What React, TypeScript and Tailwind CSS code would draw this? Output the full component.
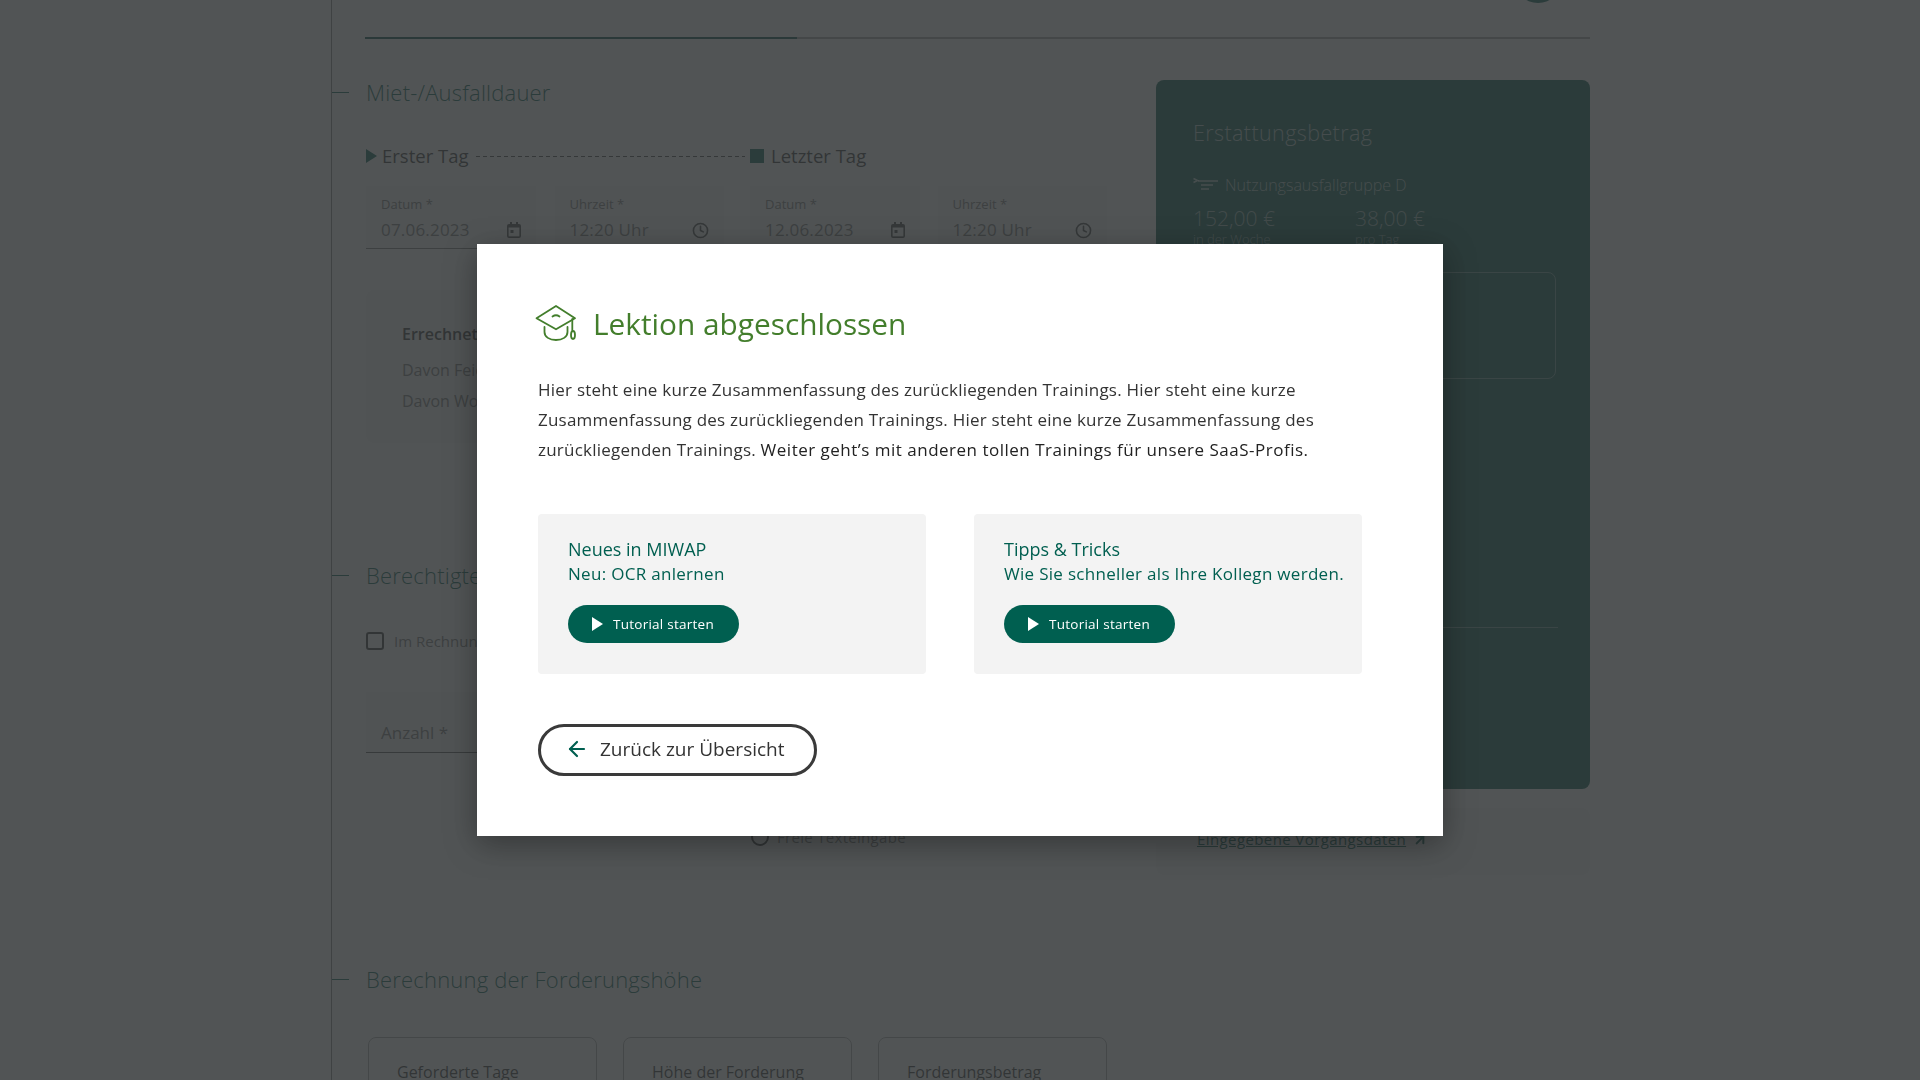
import { ArrowLeft, ArrowUpRight, Clock } from "lucide-react";

const font = { fontFamily: '"Open Sans", "Noto Sans", sans-serif' };

function CalendarIcon() {
  return (
    <svg width="14" height="16" viewBox="0 0 14 16" className="text-[#444]">
      <path d="M3 0h2v2h4V0h2v2h1a2 2 0 0 1 2 2v10a2 2 0 0 1-2 2H2a2 2 0 0 1-2-2V4a2 2 0 0 1 2-2h1z" fill="currentColor" />
      <rect x="1.6" y="5.5" width="10.8" height="8.9" fill="#f6f6f6" />
      <rect x="3.5" y="8" width="3" height="3" fill="currentColor" />
    </svg>
  );
}

function CapIcon() {
  return (
    <svg width="42" height="40" viewBox="0 0 42 40" fill="none" stroke="#437e2c" strokeWidth="1.8" strokeLinecap="round" strokeLinejoin="round">
      <path d="M21 2 40 14.3 21 25.3 1.5 14.3Z" />
      <path d="M17.5 12.5q3.5-2.5 7 0" />
      <path d="M9.5 23v5c0 5 5 8 11.5 8s11.5-3 11.5-8v-5" />
      <path d="M37.3 15v11" />
      <ellipse cx="38" cy="31" rx="2" ry="4" />
    </svg>
  );
}

function GroupIcon() {
  return (
    <svg width="26" height="16" viewBox="0 0 26 16" fill="none" stroke="#fff" strokeOpacity="0.7" strokeWidth="1.6">
      <path d="M0.5 1.5 4.5 3.5 0.5 5.5" />
      <path d="M5 4h20M8 8h12M8 12h8" />
    </svg>
  );
}

function SectionTitle({ children, className }: { children: string; className: string }) {
  return (
    <div className={`flex items-center ${className}`}>
      <div className="h-px w-[17px] bg-[#005d4f]" />
      <h2 className="ml-[17px] text-[22px] leading-[30px] font-light tracking-[0.2px] text-[#005d4f]">{children}</h2>
    </div>
  );
}

function DateField({ label, value, icon }: { label: string; value: string; icon: "date" | "time" }) {
  return (
    <div className="h-[63px] w-[169.5px] shrink-0 border-b border-[#777] bg-[#f6f6f6] px-[15px] pt-[10px]">
      <div className="text-[13px] leading-4 text-[#777]">{label}</div>
      <div className="mt-[7px] flex items-center justify-between">
        <span className="text-[17px] leading-[22px] tracking-[0.2px] text-[#777]">{value}</span>
        {icon === "date" ? <CalendarIcon /> : <Clock size={17} strokeWidth={2.2} className="text-[#444]" />}
      </div>
    </div>
  );
}

function AmountCard({ title }: { title: string }) {
  return (
    <div className="h-[80px] w-[230px] rounded-lg border border-[#aaa] px-[28px] pt-[24px]">
      <div className="text-[16px] leading-5 font-medium text-[#333]">{title}</div>
    </div>
  );
}

function TutorialCard({ title, text }: { title: string; text: string }) {
  return (
    <div className="h-[160px] w-[388px] rounded-[4px] bg-[#f3f3f3] pt-[23px] pl-[30px]">
      <div className="text-[18px] leading-[24px] font-medium text-[#005f50]">{title}</div>
      <div className="mt-px text-[17px] leading-[24px] tracking-[0.3px] whitespace-nowrap text-[#005f50]">{text}</div>
      <button className="mt-[19px] flex h-[38px] w-[171px] items-center rounded-full bg-[#005f50] pl-[24px] text-[13.5px] font-medium tracking-[0.25px] text-white">
        <svg width="11" height="14" viewBox="0 0 11 14" fill="#fff"><path d="M0 0 11 7 0 14Z" /></svg>
        <span className="ml-[10px]">Tutorial starten</span>
      </button>
    </div>
  );
}

export default function App() {
  return (
    <div className="relative h-screen overflow-hidden bg-white" style={font}>
      <div className="ml-[331px] h-full border-l border-[#888] pl-[33px]">
        <div className="relative h-[39px] w-[1225px] border-b-2 border-[#aaa]">
          <div className="absolute -bottom-[2px] left-0 h-[2px] w-[432px] bg-[#004d42]" />
          <div className="absolute -top-[45px] right-[28px] h-[48px] w-[48px] rounded-full bg-[#005d4f]" />
        </div>

        <div className="flex">
          <div className="-ml-[33px] w-[775px] shrink-0">
            <SectionTitle className="mt-[38px]">Miet-/Ausfalldauer</SectionTitle>

            <div className="mt-[34px] ml-[34px] flex h-[30px] items-center">
              <svg width="11" height="14" viewBox="0 0 11 14" fill="#005d4f"><path d="M0 0 11 7 0 14Z" /></svg>
              <span className="ml-[5px] w-[89px] text-[18.5px] font-medium text-[#333]">Erster Tag</span>
              <div className="mx-[5px] h-px w-[269px] bg-[repeating-linear-gradient(90deg,#444_0_4px,transparent_4px_7px)]" />
              <div className="h-[14px] w-[14px] bg-[#005d4f]" />
              <span className="ml-[7px] text-[18.5px] font-medium text-[#333]">Letzter Tag</span>
            </div>

            <div className="mt-[15px] ml-[34px] flex">
              <DateField label="Datum *" value="07.06.2023" icon="date" />
              <div className="ml-[19px]"><DateField label="Uhrzeit *" value="12:20 Uhr" icon="time" /></div>
              <div className="ml-[26px]"><DateField label="Datum *" value="12.06.2023" icon="date" /></div>
              <div className="ml-[18px]"><DateField label="Uhrzeit *" value="12:20 Uhr" icon="time" /></div>
            </div>

            <div className="mt-[41px] ml-[34px] h-[153px] w-[741px] rounded-lg bg-[#f6f6f6] px-[36px] pt-[33px] text-[16px] text-[#777]">
              <div className="leading-[22px] font-semibold text-[#333]">Errechnete Miettage</div>
              <div className="mt-[14px] leading-[22px]">Davon Feiertage</div>
              <div className="mt-[9px] leading-[22px]">Davon Wochenenden</div>
            </div>

            <SectionTitle className="mt-[117px]">Berechtigte Forderung</SectionTitle>

            <label className="mt-[40px] ml-[34px] flex items-center">
              <span className="h-[18px] w-[18px] rounded-[3px] border-2 border-[#333]" />
              <span className="ml-[10px] text-[15px] leading-[22px] text-[#777]">Im Rechnungsbetrag enthalten</span>
            </label>

            <div className="mt-[40px] ml-[34px] flex h-[61px] w-[360px] items-end border-b border-[#555] bg-[#f6f6f6] px-[15px] pb-[7px] text-[17px] text-[#777]">Anzahl *</div>

            <label className="mt-[74px] ml-[419px] flex items-center">
              <span className="h-[18px] w-[18px] rounded-full border-2 border-[#333]" />
              <span className="ml-[8px] text-[15px] leading-[20px] tracking-[0.3px] text-[#777]">Freie Texteingabe</span>
            </label>

            <SectionTitle className="mt-[117px]">Berechnung der Forderungshöhe</SectionTitle>

            <div className="mt-[43px] ml-[36px] flex gap-[26px]">
              <AmountCard title="Geforderte Tage" />
              <AmountCard title="Höhe der Forderung" />
              <AmountCard title="Forderungsbetrag" />
            </div>
          </div>

          <div className="ml-[49px] w-[434px] pt-[41px]">
            <div className="h-[709px] rounded-lg bg-[#00574a] px-[37px] pt-[38px] text-white/70">
              <div className="text-[21.5px] leading-[30px] font-light tracking-[0.4px]">Erstattungsbetrag</div>
              <div className="mt-[25px] flex items-center text-[16px] leading-[24px] font-light">
                <GroupIcon />
                <span className="ml-[6px]">Nutzungsausfallgruppe D</span>
              </div>
              <div className="mt-[8px] flex text-white/60">
                <div className="w-[162px]">
                  <div className="text-[21px] leading-[26px] font-light">152,00 €</div>
                  <div className="text-[13px] leading-4 font-light">in der Woche</div>
                </div>
                <div>
                  <div className="text-[21px] leading-[26px] font-light">38,00 €</div>
                  <div className="text-[13px] leading-4 font-light">pro Tag</div>
                </div>
              </div>
              <div className="mt-[25px] -mr-[3px] h-[107px] rounded-lg border border-white/40" />
              <div className="mt-[248px] -mr-[5px] border-t border-white/40" />
            </div>

            <div className="mt-[19px] flex h-[67px] items-center rounded-lg bg-[#f8f8f8] pb-[4px] pl-[41px]">
              <a className="text-[15px] tracking-[0.4px] text-[#005d4f] underline">Eingegebene Vorgangsdaten</a>
              <ArrowUpRight size={16} strokeWidth={3} className="ml-[6px] text-[#005d4f]" />
            </div>
          </div>
        </div>
      </div>

      {/* Dialog */}
      <div className="fixed inset-0 flex items-center justify-center bg-[#323637]/85">
        <div className="h-[592px] w-[966px] bg-white pt-[60px] pl-[61px] shadow-[0_8px_30px_rgba(0,0,0,0.35)]">
          <div className="-ml-[3px] flex items-center">
            <CapIcon />
            <h1 className="ml-[16px] text-[29.8px] leading-[40px] font-medium text-[#437e2c]">Lektion abgeschlossen</h1>
          </div>
          <p className="mt-[31px] w-[850px] text-[17px] leading-[30px] tracking-[0.23px] text-[#333]">
            Hier steht eine kurze Zusammenfassung des zurückliegenden Trainings. Hier steht eine kurze Zusammenfassung des zurückliegenden Trainings. Hier steht eine kurze Zusammenfassung des zurückliegenden Trainings.{" "}
            <span className="font-medium tracking-[0.5px] text-[#222]">Weiter geht’s mit anderen tollen Trainings für unsere SaaS-Profis.</span>
          </p>
          <div className="mt-[49px] flex gap-[48px]">
            <TutorialCard title="Neues in MIWAP" text="Neu: OCR anlernen" />
            <TutorialCard title="Tipps & Tricks" text="Wie Sie schneller als Ihre Kollegn werden." />
          </div>
          <button className="mt-[50px] flex h-[52px] w-[279px] items-center rounded-full border-[3px] border-[#3a3a3a] pb-[2px] pl-[24px] text-[19px] text-[#333]">
            <ArrowLeft size={24} strokeWidth={2.2} className="text-[#005f50]" />
            <span className="ml-[11px]">Zurück zur Übersicht</span>
          </button>
        </div>
      </div>
    </div>
  );
}
